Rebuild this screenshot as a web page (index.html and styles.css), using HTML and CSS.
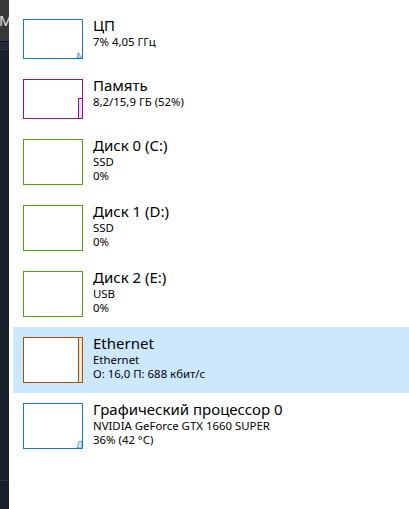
FILE: index.html
```html
<!DOCTYPE html>
<html lang="ru">
  <head>
    <meta charset="UTF-8" />
    <title>Производительность</title>
    <link rel="stylesheet" href="styles.css">
  </head>
  <body>
    <div class="rail">
      <div class="rail-tab">M</div>
      <div class="rail-band"></div>
      <div class="rail-fill"></div>
    </div>

    <div class="list">
      <div class="item">
        <div class="graph cpu">
          <svg width="58" height="38" viewBox="0 0 58 38">
            <path d="M53 38 L54.5 32.5 L55.5 35 L56.5 36 L58 38 Z" fill="#b9d8ee" stroke="#5fa6d6" stroke-width="1" />
          </svg>
        </div>
        <div class="info">
          <div class="title">ЦП</div>
          <div class="sub">7% 4,05 ГГц</div>
        </div>
      </div>

      <div class="item">
        <div class="graph mem">
          <svg width="58" height="38" viewBox="0 0 58 38">
            <rect x="54.5" y="18.5" width="4" height="20" fill="#ecd9f2" stroke="#8b12ae" stroke-width="1" />
          </svg>
        </div>
        <div class="info">
          <div class="title">Память</div>
          <div class="sub">8,2/15,9 ГБ (52%)</div>
        </div>
      </div>

      <div class="item">
        <div class="graph disk"><svg width="58" height="44"></svg></div>
        <div class="info">
          <div class="title">Диск 0 (C:)</div>
          <div class="sub">SSD</div>
          <div class="sub">0%</div>
        </div>
      </div>

      <div class="item">
        <div class="graph disk"><svg width="58" height="44"></svg></div>
        <div class="info">
          <div class="title">Диск 1 (D:)</div>
          <div class="sub">SSD</div>
          <div class="sub">0%</div>
        </div>
      </div>

      <div class="item">
        <div class="graph disk"><svg width="58" height="44"></svg></div>
        <div class="info">
          <div class="title">Диск 2 (E:)</div>
          <div class="sub">USB</div>
          <div class="sub">0%</div>
        </div>
      </div>

      <div class="item selected">
        <div class="graph net">
          <svg width="58" height="44" viewBox="0 0 58 44">
            <rect x="55" y="0" width="3" height="44" fill="#f6dcc4" />
            <line x1="56.5" y1="0" x2="56.5" y2="44" stroke="#fff" stroke-width="1" stroke-dasharray="1 1" />
            <line x1="54.5" y1="0" x2="54.5" y2="44" stroke="#a74f01" stroke-width="1" />
          </svg>
        </div>
        <div class="info">
          <div class="title">Ethernet</div>
          <div class="sub">Ethernet</div>
          <div class="sub">О: 16,0 П: 688 кбит/с</div>
        </div>
      </div>

      <div class="item">
        <div class="graph gpu">
          <svg width="58" height="44" viewBox="0 0 58 44">
            <path d="M53 44 L54 41 L55 37.5 L58 37.5 L58 44 Z" fill="#d2e6f4" stroke="#5fa6d6" stroke-width="1" />
          </svg>
        </div>
        <div class="info">
          <div class="title">Графический процессор 0</div>
          <div class="sub">NVIDIA GeForce GTX 1660 SUPER</div>
          <div class="sub">36% (42 °C)</div>
        </div>
      </div>
    </div>
  </body>
</html>
```

FILE: styles.css
```css
body {
  margin: 0;
  height: 509px;
  overflow: hidden;
  display: flex;
  background: #fff;
  font-family: "Noto Sans", "Open Sans", sans-serif;
  color: #000;
}

/* тёмная полоса слева */
.rail {
  width: 9px;
  flex: none;
  display: flex;
  flex-direction: column;
  overflow: hidden;
  background: #18212b;
}

.rail-tab {
  height: 41px;
  background: #383838;
  color: #e4e4e4;
  font-size: 15px;
  line-height: 40px;
  margin-left: -1px;
  border-bottom: 1px solid #10161c;
}

.rail-band {
  height: 7px;
  background: #1f2a35;
  border-bottom: 1px solid #2b3643;
}

.rail-fill {
  height: 430px;
  border-bottom: 1px solid #2b3643;
}

.list {
  flex: 1;
  padding: 9px 0 0 4px;
}

.item {
  display: flex;
  align-items: flex-start;
  padding: 10px;
}

.item.selected {
  background: #cce8ff;
}

.graph {
  flex: none;
  background: #fff;
  border: 1px solid;
}

.graph svg {
  display: block;
}

.graph.cpu,
.graph.gpu {
  border-color: #117dbb;
}

.graph.mem {
  border-color: #8b12ae;
}

.graph.disk {
  border-color: #4da60c;
}

.graph.net {
  border-color: #a74f01;
}

.info {
  margin: -4px 0 0 10px;
  white-space: nowrap;
}

.title {
  font-size: 15px;
  line-height: 20px;
}

.sub {
  font-size: 11.4px;
  line-height: 14px;
}
```
